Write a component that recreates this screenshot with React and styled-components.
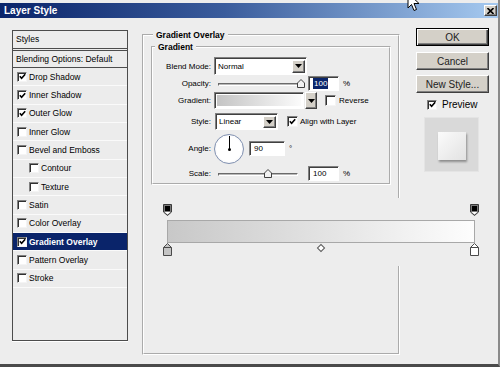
import React from "react";
import styled, { createGlobalStyle } from "styled-components";

const Global = createGlobalStyle`
  html, body { margin: 0; padding: 0; background: #ededed; }
  body { font-family: "Liberation Sans", Arial, sans-serif; font-size: 8px; color: #000; }
`;

const Window = styled.div`
  position: relative;
  width: 500px;
  height: 367px;
  box-sizing: border-box;
  padding-top: 3px;
  background: #ededed;
  border-right: 2px solid #8a8a8a;
  border-bottom: 3px solid #4a4a4a;
  overflow: hidden;
  display: flex;
  flex-direction: column;
`;

const TitleBar = styled.div`
  height: 15px;
  flex: none;
  display: flex;
  align-items: center;
  justify-content: space-between;
  padding: 0 1px 0 4px;
  background: linear-gradient(to right, #0a246a 0%, #3a5c9c 45%, #a6caf0 100%);
`;

const Title = styled.span`
  color: #fff;
  font-weight: bold;
  font-size: 10px;
  line-height: 15px;
`;

const CloseBtn = styled.div`
  width: 13px;
  height: 11px;
  box-sizing: border-box;
  background: #d4d0c8;
  border: 1px solid;
  border-color: #fff #404040 #404040 #fff;
  box-shadow: inset -1px -1px 0 #808080;
  display: flex;
  align-items: center;
  justify-content: center;
`;

const Body = styled.div`
  display: flex;
  align-items: flex-start;
  padding: 10px 0 0 12px;
`;

const Sidebar = styled.div`
  width: 116px;
  height: 311px;
  margin-top: 2px;
  box-sizing: border-box;
  border: 1px solid #4c4c4c;
  box-shadow: 0 1px 0 #fff;
  background: #ececec;
  display: flex;
  flex-direction: column;
`;

const SideHead = styled.div`
  height: 17px;
  line-height: 17px;
  padding-left: 3px;
  border-bottom: 1px solid #4c4c4c;
  font-size: 8.5px;
`;

const Blending = styled.div`
  height: 16px;
  line-height: 16px;
  margin-top: 1px;
  padding-left: 3px;
  border-top: 1px solid #4c4c4c;
  border-bottom: 1px solid #4c4c4c;
  font-size: 8.5px;
`;

const Item = styled.div`
  height: 18.35px;
  box-sizing: border-box;
  display: flex;
  align-items: center;
  gap: 2px;
  padding-left: ${(p) => (p.$indent ? 16 : 4)}px;
  border-bottom: 1px solid #fafafa;
  font-size: 8.5px;
  background: ${(p) => (p.$active ? "#0a246a" : "transparent")};
  color: ${(p) => (p.$active ? "#fff" : "#000")};
  font-weight: ${(p) => (p.$active ? "bold" : "normal")};
`;

const Box = styled.span`
  width: ${(p) => p.$size}px;
  height: ${(p) => p.$size}px;
  flex: none;
  box-sizing: border-box;
  background: #fff;
  border: 1px solid;
  border-color: #808080 #f4f4f4 #f4f4f4 #808080;
  box-shadow: inset 1px 1px 0 #303030;
  display: flex;
  align-items: center;
  justify-content: center;
  margin-left: ${(p) => p.$ml}px;
  margin-right: ${(p) => p.$gap}px;
`;

const Check = ({ on, size = 10, gap = 0, ml = 0 }) => (
  <Box $size={size} $gap={gap} $ml={ml}>
    {on && (
      <svg width="7" height="7" viewBox="0 0 7 7">
        <polyline points="0.8,3.2 2.6,5.2 6.2,1.2" fill="none" stroke="#000" strokeWidth="1.6" />
      </svg>
    )}
  </Box>
);

const Main = styled.div`
  width: 258px;
  flex: none;
  margin: 2px 0 0 14px;
`;

const Group = styled.fieldset`
  margin: 0;
  padding: ${(p) => (p.$outer ? "2px 7px 0 7px" : "0 0 2px 0")};
  border: 2px groove #fff;
  min-width: 0;
  height: ${(p) => (p.$outer ? "325px" : "auto")};
  box-sizing: border-box;
`;

const Legend = styled.legend`
  padding: 0 3px;
  margin-left: 2px;
  font-weight: bold;
  font-size: 8.5px;
  line-height: 10px;
`;

const Rows = styled.div`
  padding-top: 4px;
  display: flex;
  flex-direction: column;
`;

const Row = styled.div`
  display: flex;
  align-items: center;
  height: ${(p) => p.$h}px;
  margin-top: ${(p) => p.$mt || 0}px;
`;

const Label = styled.span`
  width: 58px;
  flex: none;
  text-align: right;
  margin-right: ${(p) => p.$mr ?? 3}px;
`;

const Sunken = styled.div`
  box-sizing: border-box;
  height: ${(p) => p.$h}px;
  width: ${(p) => p.$w}px;
  flex: none;
  background: #fff;
  border: 1px solid;
  border-color: #808080 #fff #fff #808080;
  box-shadow: inset 1px 1px 0 #404040;
  display: flex;
  align-items: center;
  padding: 0 1px 0 3px;
  margin-left: ${(p) => p.$ml || 0}px;
  margin-right: ${(p) => p.$mr || 0}px;
`;

const SelText = styled.span`
  flex: 1;
`;

const ArrowBtn = styled.div`
  width: ${(p) => p.$w || 13}px;
  height: ${(p) => p.$h || 13}px;
  box-sizing: border-box;
  flex: none;
  background: #d4d0c8;
  border: 1px solid;
  border-color: #fff #404040 #404040 #fff;
  box-shadow: inset -1px -1px 0 #808080;
  display: flex;
  align-items: center;
  justify-content: center;
  margin-left: ${(p) => p.$ml || 0}px;
`;

const Tri = () => (
  <svg width="7" height="4" viewBox="0 0 7 4">
    <path d="M0 0 H7 L3.5 4 Z" fill="#000" />
  </svg>
);

const Swatch = styled.div`
  flex: 1;
  height: 100%;
  background: linear-gradient(to right, #c4c4c4, #fbfbfb);
`;

const SliderWrap = styled.div`
  position: relative;
  width: ${(p) => p.$w}px;
  height: 12px;
  flex: none;
  margin-left: 4px;
`;

const Track = styled.div`
  position: absolute;
  left: 0;
  right: 0;
  top: 5px;
  height: 3px;
  box-sizing: border-box;
  border: 1px solid;
  border-color: #6a6a6a #fff #fff #6a6a6a;
  background: #b8b8b8;
`;

const Thumb = styled.svg`
  position: absolute;
  top: 1px;
  margin-left: -4px;
`;

const Slider = ({ w, pos }) => (
  <SliderWrap $w={w}>
    <Track />
    <Thumb width="8" height="9" viewBox="0 0 8 9" style={{ left: `${pos * w}px` }}>
      <path d="M0.5 8.5 V4 L4 0.5 L7.5 4 V8.5 Z" fill="#f2f2f2" stroke="#404040" />
    </Thumb>
  </SliderWrap>
);

const Field = styled(Sunken)`
  padding-left: 4px;
`;

const Hilite = styled.span`
  background: #0a246a;
  color: #fff;
  padding: 0 1px;
  line-height: 11px;
`;

const Unit = styled.span`
  margin-left: 4px;
`;

const Dial = styled.div`
  position: relative;
  width: 30px;
  height: 30px;
  flex: none;
  box-sizing: border-box;
  border-radius: 50%;
  border: 1px solid #8090b0;
  background: radial-gradient(circle at 50% 50%, #fff 60%, #e6e8ee 100%);
  margin: 0 5px 0 0;
`;

const Needle = styled.div`
  position: absolute;
  left: 13.5px;
  top: 1px;
  width: 1px;
  height: 13px;
  background: #000;
  &::after {
    content: "";
    position: absolute;
    left: -1px;
    bottom: -2px;
    width: 3px;
    height: 3px;
    border-radius: 50%;
    background: #000;
  }
`;

const Editor = styled.div`
  position: relative;
  width: 316px;
  margin: 13px 0 0 12px;
  padding: 6px 0 10px;
  background: #ededed;
`;

const StopRow = styled.div`
  display: flex;
  justify-content: space-between;
  align-items: flex-start;
`;

const Bar = styled.div`
  height: 23px;
  margin: 4px 4px 0;
  box-sizing: border-box;
  border: 1px solid #a8a8a8;
  background: linear-gradient(to right, #c8c8c8, #fdfdfd);
`;

const Diamond = styled.span`
  width: 4px;
  height: 4px;
  margin-top: 2px;
  border: 1px solid #555;
  background: #fff;
  transform: rotate(45deg);
`;

const TopStop = () => (
  <svg width="9" height="12" viewBox="0 0 9 12">
    <path d="M0.5 0.5 H8.5 V8 L4.5 11.5 L0.5 8 Z" fill="#7a7a7a" stroke="#3a3a3a" />
    <path d="M1.5 8 L4.5 10.5 L7.5 8 Z" fill="#fff" />
    <rect x="2" y="2" width="5" height="5" fill="#000" />
  </svg>
);

const BottomStop = ({ fill }) => (
  <svg width="9" height="13" viewBox="0 0 9 13">
    <path d="M4.5 0.5 L8.5 4.5 V12.5 H0.5 V4.5 Z" fill={fill} stroke="#4a4a4a" />
    <path d="M0.5 4.5 H8.5" stroke="#4a4a4a" />
  </svg>
);

const Side = styled.div`
  width: 73px;
  flex: none;
  margin-left: 16px;
  display: flex;
  flex-direction: column;
  font-size: 10px;
`;

const Button = styled.div`
  height: 18px;
  box-sizing: border-box;
  margin-top: ${(p) => p.$mt || 0}px;
  background: #d4d0c8;
  border: 1px solid;
  border-color: ${(p) => (p.$def ? "#000" : "#fff #404040 #404040 #fff")};
  box-shadow: ${(p) =>
    p.$def
      ? "inset 1px 1px 0 #fff, inset -1px -1px 0 #404040, inset -2px -2px 0 #808080"
      : "inset -1px -1px 0 #808080"};
  display: flex;
  align-items: center;
  justify-content: center;
  color: #222;
`;

const PreviewRow = styled.div`
  display: flex;
  align-items: center;
  gap: 5px;
  margin: 6px 0 0 11px;
  height: 11px;
`;

const PreviewBox = styled.div`
  width: 55px;
  height: 55px;
  margin: 7px 0 0 8px;
  box-sizing: border-box;
  border: 1px solid #e4e4e4;
  background: #d9d9d9;
  display: flex;
  align-items: center;
  justify-content: center;
`;

const PreviewSquare = styled.div`
  width: 28px;
  height: 28px;
  margin: 2px 0 0 1px;
  background: linear-gradient(to bottom right, #fbfbfb, #e2e2e2);
  box-shadow: 1px 2px 2px rgba(0, 0, 0, 0.35);
`;

const CursorSvg = styled.svg`
  position: absolute;
  left: 407px;
  top: -8px;
`;

const items = [
  { name: "Drop Shadow", on: true },
  { name: "Inner Shadow", on: true },
  { name: "Outer Glow", on: true },
  { name: "Inner Glow" },
  { name: "Bevel and Emboss" },
  { name: "Contour", indent: true },
  { name: "Texture", indent: true },
  { name: "Satin" },
  { name: "Color Overlay" },
  { name: "Gradient Overlay", on: true, active: true },
  { name: "Pattern Overlay" },
  { name: "Stroke" },
];

export default function App() {
  return (
    <>
      <Global />
      <Window>
        <TitleBar>
          <Title>Layer Style</Title>
          <CloseBtn>
            <svg width="7" height="6" viewBox="0 0 7 6">
              <path d="M0.5 0 L6.5 6 M6.5 0 L0.5 6" stroke="#000" strokeWidth="1.6" />
            </svg>
          </CloseBtn>
        </TitleBar>
        <Body>
          <Sidebar>
            <SideHead>Styles</SideHead>
            <Blending>Blending Options: Default</Blending>
            {items.map((it) => (
              <Item key={it.name} $indent={it.indent} $active={it.active}>
                <Check on={it.on} />
                {it.name}
              </Item>
            ))}
          </Sidebar>

          <Main>
            <Group $outer>
              <Legend>Gradient Overlay</Legend>
              <Group>
                <Legend>Gradient</Legend>
                <Rows>
                  <Row $h={18} $mt={1}>
                    <Label>Blend Mode:</Label>
                    <Sunken $w={93} $h={18}>
                      <SelText>Normal</SelText>
                      <ArrowBtn>
                        <Tri />
                      </ArrowBtn>
                    </Sunken>
                  </Row>
                  <Row $h={15} $mt={1}>
                    <Label>Opacity:</Label>
                    <Slider w={83} pos={1} />
                    <Field $w={31} $h={15} $ml={7}>
                      <Hilite>100</Hilite>
                    </Field>
                    <Unit>%</Unit>
                  </Row>
                  <Row $h={17} $mt={1}>
                    <Label>Gradient:</Label>
                    <Sunken $w={90} $h={17} style={{ padding: 2 }}>
                      <Swatch />
                    </Sunken>
                    <ArrowBtn $w={12} $h={17} $ml={1}>
                      <Tri />
                    </ArrowBtn>
                    <Check size={11} gap={3} ml={8} on={false} />
                    Reverse
                  </Row>
                  <Row $h={17} $mt={4}>
                    <Label $mr={4}>Style:</Label>
                    <Sunken $w={63} $h={17} $mr={9}>
                      <SelText>Linear</SelText>
                      <ArrowBtn $h={12}>
                        <Tri />
                      </ArrowBtn>
                    </Sunken>
                    <Check size={11} gap={2} on />
                    Align with Layer
                  </Row>
                  <Row $h={31} $mt={3}>
                    <Label>Angle:</Label>
                    <Dial>
                      <Needle />
                    </Dial>
                    <Field $w={36} $h={15}>
                      90
                    </Field>
                    <Unit>°</Unit>
                  </Row>
                  <Row $h={15} $mt={2}>
                    <Label>Scale:</Label>
                    <Slider w={80} pos={0.63} />
                    <Field $w={31} $h={15} $ml={10}>
                      100
                    </Field>
                    <Unit>%</Unit>
                  </Row>
                </Rows>
              </Group>
              <Editor>
                <StopRow>
                  <TopStop />
                  <TopStop />
                </StopRow>
                <Bar />
                <StopRow>
                  <BottomStop fill="#c4c4c4" />
                  <Diamond />
                  <BottomStop fill="#fff" />
                </StopRow>
              </Editor>
            </Group>
          </Main>

          <Side>
            <Button $def>OK</Button>
            <Button $mt={6}>Cancel</Button>
            <Button $mt={5}>New Style...</Button>
            <PreviewRow>
              <Check on size={10} />
              Preview
            </PreviewRow>
            <PreviewBox>
              <PreviewSquare />
            </PreviewBox>
          </Side>
        </Body>
        <CursorSvg width="14" height="22" viewBox="0 0 14 22">
          <path
            d="M1 1 L1 16 L4.5 12.5 L7 18.5 L9.5 17.5 L7 11.5 L12 11.5 Z"
            fill="#fff"
            stroke="#000"
            strokeWidth="1"
          />
        </CursorSvg>
      </Window>
    </>
  );
}
